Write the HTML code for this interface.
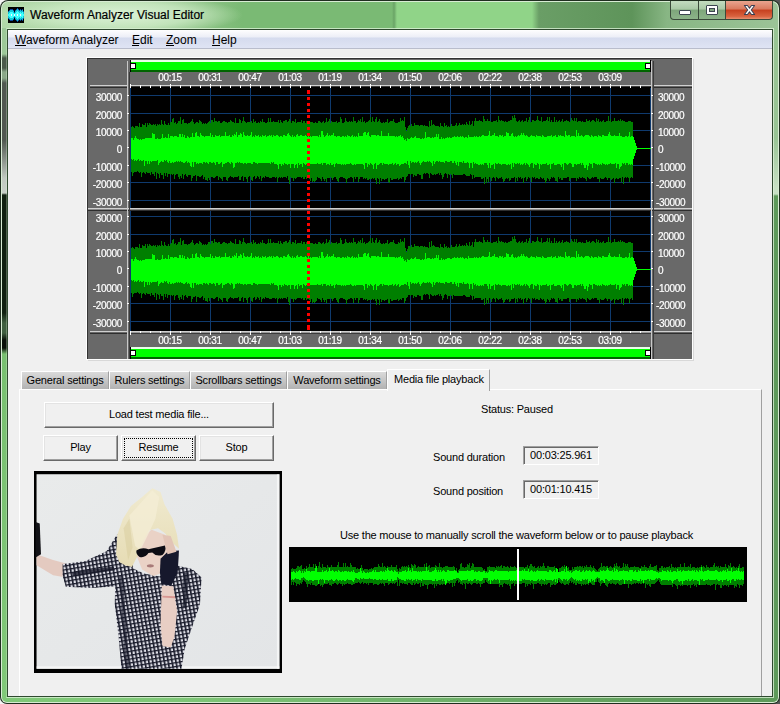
<!DOCTYPE html>
<html><head><meta charset="utf-8">
<style>
*{box-sizing:border-box;margin:0;padding:0}
html,body{width:780px;height:704px;overflow:hidden;background:linear-gradient(90deg,#f4f4f4 0,#f4f4f4 390px,#555 391px)}
body{position:relative;font-family:"Liberation Sans",sans-serif;color:#000}
.abs{position:absolute}
#frame{position:absolute;left:0;top:0;width:780px;height:704px;border-radius:8px 8px 7px 7px;background:#1f2e1f}
#flight{position:absolute;left:1px;top:1px;width:778px;height:702px;border-radius:7px 7px 6px 6px;background:#d8ecd4}
#fgreen{position:absolute;left:2px;top:2px;width:776px;height:700px;border-radius:6px 6px 5px 5px;background:linear-gradient(90deg,#b0d8a8 0,#a6d09e 150px,#7aba74 240px,#7aba74 390px,#6aa466 392px,#90d488 395px,#90d488 530px,#6a9e66 537px,#5e945a 630px,#88b684 665px,#9cc498 780px)}
#sideL{position:absolute;left:2px;top:28px;width:5px;height:669px;background:linear-gradient(#9cc898 0,#9cc898 26px,#4a5a4a 30px,#4a5a4a 40px,#8aa888 44px,#8aa888 50px,#505850 55px,#505850 112px,#c0c8c0 150px,#c8d0c8 165px,#102010 167px,#102010 285px,#406040 295px,#406040 305px,#081008 312px,#081008 320px,#78c070 326px,#80c878 669px)}
#sideR{position:absolute;left:773px;top:28px;width:5px;height:670px;background:linear-gradient(#98c494 0,#98c494 110px,#c8e0c4 160px,#c8e0c4 166px,#5e9a5a 168px,#5e9a5a 669px)}
#bottom{position:absolute;left:2px;top:697px;width:776px;height:5px;border-radius:0 0 5px 5px;background:linear-gradient(90deg,#80c878 0,#80c878 150px,#76b870 350px,#5e9a5a 700px)}
#glow{position:absolute;left:0;top:2px;width:250px;height:26px;background:radial-gradient(ellipse 125px 20px at 118px 13px,rgba(225,245,220,.9) 0,rgba(205,235,198,.75) 60%,rgba(180,220,172,0) 100%)}
#title{position:absolute;left:30px;top:8px;font-size:12px;line-height:14px;color:#000;white-space:nowrap;-webkit-text-stroke:0.2px #000}
#icon{position:absolute;left:8px;top:7px;width:16px;height:16px;background:#000}
#caps{position:absolute;left:670px;top:1px;width:103px;height:19px}
.cap{position:absolute;top:0;height:19px;border:1px solid #3a4a3a;border-top:none}
#cmin{left:0;width:29px;border-radius:0 0 0 4px;background:linear-gradient(#c3dcc0 0,#a9c9a6 45%,#7ea67b 50%,#8cb389 100%)}
#cmax{left:28px;width:28px;background:linear-gradient(#c3dcc0 0,#a9c9a6 45%,#7ea67b 50%,#8cb389 100%)}
#cclose{left:55px;width:48px;border-radius:0 0 4px 0;background:linear-gradient(#e9a48f 0,#d97a5e 45%,#c6401f 50%,#d8623f 85%,#e89070 100%)}
#client{position:absolute;left:7px;top:29px;width:766px;height:668px;border:1px solid #2f4a2f;background:#f0f0f0;overflow:hidden}
#menubar{position:absolute;left:0;top:0;width:764px;height:19px;background:linear-gradient(#ffffff 0,#fbfbfd 1px,#eceef7 7px,#d5dbee 8px,#dfe4f4 18px);border-bottom:1px solid #b9bdcc}
.mi{position:absolute;top:3px;font-size:12px;line-height:14px;white-space:nowrap}
.mi u{text-decoration:none}
.ul{position:absolute;top:15px;height:1px;background:#000}
/* waveform control */
#wf{position:absolute;left:87px;top:58px;width:607px;height:303px;background:#696969}
.al{position:absolute;font-size:10px;line-height:12px;letter-spacing:-0.3px;color:#fff;white-space:nowrap;-webkit-text-stroke:0.2px #fff;will-change:transform}
.al.l{left:0;width:122px;text-align:right}
.al.r{left:658px;width:40px;text-align:left}
.tl{position:absolute;width:40px;text-align:center;font-size:10px;line-height:12px;letter-spacing:-0.3px;color:#fff;white-space:nowrap;-webkit-text-stroke:0.2px #fff;will-change:transform}
.tk{position:absolute;width:2px;height:1px;background:#fff}
/* tabs */
.tab{position:absolute;top:371px;height:18px;border-top:1px solid #fff;border-left:1px solid #fff;border-right:1px solid #a0a0a0;background:linear-gradient(#dadada,#b2b2b2);font-size:11px;letter-spacing:-0.2px;line-height:17px;text-align:center;white-space:nowrap}
.lbl{position:absolute;font-size:11px;letter-spacing:-0.2px;line-height:12px;white-space:nowrap}
.btn{position:absolute;background:#f0f0f0;border-top:1px solid #fff;border-left:1px solid #fff;border-right:1px solid #696969;border-bottom:1px solid #696969;box-shadow:inset -1px -1px 0 #a0a0a0,inset 1px 1px 0 #e3e3e3;font-size:11px;letter-spacing:-0.2px;text-align:center;white-space:nowrap}
.sunk{position:absolute;border-top:1px solid #a0a0a0;border-left:1px solid #a0a0a0;border-right:1px solid #fff;border-bottom:1px solid #fff;box-shadow:inset 1px 1px 0 #696969;font-size:11px;letter-spacing:-0.2px;line-height:16px;text-align:center;white-space:nowrap}
</style></head><body>
<div id="frame"></div><div id="flight"></div><div id="fgreen"></div>
<div id="sideL"></div><div id="sideR"></div><div id="bottom"></div>
<div class="abs" style="left:6px;top:28px;width:768px;height:670px;border:1px solid rgba(225,245,220,.75);border-left-color:rgba(225,245,220,.3)"></div>
<div id="glow"></div>
<div id="icon"><svg width="16" height="16" viewBox="0 0 16 16" shape-rendering="crispEdges"><rect width="16" height="16" fill="#000"/><rect x="0" y="4" width="1" height="8" fill="#0848a0"/><rect x="0" y="5" width="1" height="6" fill="#10c8d8"/><rect x="0" y="7" width="1" height="2" fill="#40ffff"/><rect x="1" y="3" width="1" height="10" fill="#0848a0"/><rect x="1" y="4" width="1" height="8" fill="#10c8d8"/><rect x="1" y="6" width="1" height="4" fill="#40ffff"/><rect x="2" y="2" width="1" height="12" fill="#0848a0"/><rect x="2" y="3" width="1" height="10" fill="#10c8d8"/><rect x="2" y="5" width="1" height="6" fill="#40ffff"/><rect x="3" y="2" width="1" height="12" fill="#0848a0"/><rect x="3" y="3" width="1" height="10" fill="#10c8d8"/><rect x="3" y="5" width="1" height="6" fill="#40ffff"/><rect x="4" y="2" width="1" height="12" fill="#0848a0"/><rect x="4" y="3" width="1" height="10" fill="#10c8d8"/><rect x="4" y="5" width="1" height="6" fill="#40ffff"/><rect x="5" y="3" width="1" height="10" fill="#0848a0"/><rect x="5" y="4" width="1" height="8" fill="#10c8d8"/><rect x="5" y="6" width="1" height="4" fill="#40ffff"/><rect x="6" y="5" width="1" height="6" fill="#0848a0"/><rect x="6" y="6" width="1" height="4" fill="#10c8d8"/><rect x="6" y="7" width="1" height="2" fill="#40ffff"/><rect x="7" y="3" width="1" height="10" fill="#0848a0"/><rect x="7" y="4" width="1" height="8" fill="#10c8d8"/><rect x="7" y="6" width="1" height="4" fill="#40ffff"/><rect x="8" y="2" width="1" height="12" fill="#0848a0"/><rect x="8" y="3" width="1" height="10" fill="#10c8d8"/><rect x="8" y="5" width="1" height="6" fill="#40ffff"/><rect x="9" y="1" width="1" height="14" fill="#0848a0"/><rect x="9" y="2" width="1" height="12" fill="#10c8d8"/><rect x="9" y="4" width="1" height="8" fill="#40ffff"/><rect x="10" y="2" width="1" height="12" fill="#0848a0"/><rect x="10" y="3" width="1" height="10" fill="#10c8d8"/><rect x="10" y="5" width="1" height="6" fill="#40ffff"/><rect x="11" y="3" width="1" height="10" fill="#0848a0"/><rect x="11" y="4" width="1" height="8" fill="#10c8d8"/><rect x="11" y="6" width="1" height="4" fill="#40ffff"/><rect x="12" y="2" width="1" height="12" fill="#0848a0"/><rect x="12" y="3" width="1" height="10" fill="#10c8d8"/><rect x="12" y="5" width="1" height="6" fill="#40ffff"/><rect x="13" y="3" width="1" height="10" fill="#0848a0"/><rect x="13" y="4" width="1" height="8" fill="#10c8d8"/><rect x="13" y="6" width="1" height="4" fill="#40ffff"/><rect x="14" y="2" width="1" height="12" fill="#0848a0"/><rect x="14" y="3" width="1" height="10" fill="#10c8d8"/><rect x="14" y="5" width="1" height="6" fill="#40ffff"/><rect x="15" y="4" width="1" height="8" fill="#0848a0"/><rect x="15" y="5" width="1" height="6" fill="#10c8d8"/><rect x="15" y="7" width="1" height="2" fill="#40ffff"/><rect x="3" y="7" width="1" height="2" fill="#f0f8ff"/><rect x="6" y="7" width="1" height="2" fill="#f0f8ff"/><rect x="9" y="7" width="1" height="2" fill="#f0f8ff"/><rect x="12" y="7" width="1" height="2" fill="#f0f8ff"/></svg></div>
<div id="title">Waveform Analyzer Visual Editor</div>
<div id="caps">
 <div class="cap" id="cmin"><div class="abs" style="left:8px;top:9px;width:12px;height:5px;background:#fff;border:1px solid #3c4650;border-radius:1px"></div></div>
 <div class="cap" id="cmax"><div class="abs" style="left:7px;top:4px;width:12px;height:10px;border:1px solid #3c4650;border-radius:1px;background:#fff"><div class="abs" style="left:2px;top:2px;width:6px;height:4px;background:#82a880;border:1px solid #3c4650"></div></div></div>
 <div class="cap" id="cclose"><svg class="abs" style="left:17px;top:3px" width="13" height="12" viewBox="-1 -1 14 12" preserveAspectRatio="none"><path d="M0.5 0.5H3.8L6 3.2L8.2 0.5H11.5L7.9 5L11.5 9.5H8.2L6 6.8L3.8 9.5H0.5L4.1 5Z" fill="#fff" stroke="#3a3f52" stroke-width="1.1" stroke-linejoin="round"/></svg></div>
</div>

<div id="client">
 <div id="menubar">
  <div class="mi" style="left:7px"><u>W</u>aveform Analyzer</div>
  <div class="mi" style="left:124px"><u>E</u>dit</div>
  <div class="mi" style="left:158px"><u>Z</u>oom</div>
  <div class="mi" style="left:204px"><u>H</u>elp</div>
  <div class="ul" style="left:7px;width:11px"></div><div class="ul" style="left:124px;width:7px"></div><div class="ul" style="left:158px;width:8px"></div><div class="ul" style="left:204px;width:8px"></div>
 </div>
</div>

<!-- waveform control (page coords) -->
<svg class="abs" style="left:0;top:0" width="780" height="704" shape-rendering="crispEdges">
<rect x="86" y="57" width="607" height="1" fill="#ffffff"/>
<rect x="86" y="57" width="1" height="303" fill="#ffffff"/>
<rect x="87" y="58" width="606" height="302" fill="#696969"/>
<rect x="87" y="58" width="606" height="1" fill="#333"/>
<rect x="87" y="58" width="1" height="302" fill="#333"/>
<rect x="87" y="359" width="606" height="1" fill="#fff"/>
<rect x="692" y="58" width="1" height="302" fill="#fff"/>
<rect x="88" y="360" width="606" height="1" fill="#d8d8d8"/>
<rect x="693" y="59" width="1" height="302" fill="#d8d8d8"/>
<rect x="130" y="87" width="521" height="121" fill="#000"/>
<rect x="130" y="210" width="521" height="121" fill="#000"/>
<rect x="90" y="85" width="37" height="1" fill="#d0d0d0"/>
<rect x="90" y="87" width="37" height="1" fill="#2e2e2e"/>
<rect x="130" y="85" width="521" height="1" fill="#d0d0d0"/>
<rect x="130" y="86" width="521" height="1" fill="#3a3a3a"/>
<rect x="654" y="85" width="38" height="1" fill="#d0d0d0"/>
<rect x="654" y="87" width="38" height="1" fill="#2e2e2e"/>
<rect x="88" y="208" width="604" height="1" fill="#d0d0d0"/>
<rect x="88" y="209" width="604" height="1" fill="#8a8a8a"/>
<rect x="88" y="210" width="604" height="1" fill="#2e2e2e"/>
<rect x="90" y="331" width="37" height="1" fill="#d0d0d0"/>
<rect x="90" y="333" width="37" height="1" fill="#2e2e2e"/>
<rect x="130" y="331" width="521" height="1" fill="#d0d0d0"/>
<rect x="130" y="332" width="521" height="1" fill="#9a9a9a"/>
<rect x="130" y="333" width="521" height="1" fill="#3a3a3a"/>
<rect x="654" y="331" width="38" height="1" fill="#d0d0d0"/>
<rect x="654" y="333" width="38" height="1" fill="#2e2e2e"/>
<rect x="127" y="61" width="1" height="298" fill="#c8c8c8"/>
<rect x="129" y="72" width="1" height="287" fill="#3a3a3a"/>
<rect x="651" y="61" width="1" height="298" fill="#c8c8c8"/>
<rect x="653" y="61" width="1" height="298" fill="#3a3a3a"/>
<rect x="130" y="95" width="521" height="1" fill="#0f3a6e"/>
<rect x="130" y="113" width="521" height="1" fill="#0f3a6e"/>
<rect x="130" y="130" width="521" height="1" fill="#0f3a6e"/>
<rect x="130" y="165" width="521" height="1" fill="#0f3a6e"/>
<rect x="130" y="182" width="521" height="1" fill="#0f3a6e"/>
<rect x="130" y="200" width="521" height="1" fill="#0f3a6e"/>
<rect x="130" y="216" width="521" height="1" fill="#0f3a6e"/>
<rect x="130" y="234" width="521" height="1" fill="#0f3a6e"/>
<rect x="130" y="251" width="521" height="1" fill="#0f3a6e"/>
<rect x="130" y="286" width="521" height="1" fill="#0f3a6e"/>
<rect x="130" y="303" width="521" height="1" fill="#0f3a6e"/>
<rect x="130" y="321" width="521" height="1" fill="#0f3a6e"/>
<rect x="130" y="88" width="1" height="120" fill="#0f3a6e"/>
<rect x="130" y="211" width="1" height="120" fill="#0f3a6e"/>
<rect x="170" y="88" width="1" height="120" fill="#0f3a6e"/>
<rect x="170" y="211" width="1" height="120" fill="#0f3a6e"/>
<rect x="210" y="88" width="1" height="120" fill="#0f3a6e"/>
<rect x="210" y="211" width="1" height="120" fill="#0f3a6e"/>
<rect x="250" y="88" width="1" height="120" fill="#0f3a6e"/>
<rect x="250" y="211" width="1" height="120" fill="#0f3a6e"/>
<rect x="290" y="88" width="1" height="120" fill="#0f3a6e"/>
<rect x="290" y="211" width="1" height="120" fill="#0f3a6e"/>
<rect x="330" y="88" width="1" height="120" fill="#0f3a6e"/>
<rect x="330" y="211" width="1" height="120" fill="#0f3a6e"/>
<rect x="370" y="88" width="1" height="120" fill="#0f3a6e"/>
<rect x="370" y="211" width="1" height="120" fill="#0f3a6e"/>
<rect x="410" y="88" width="1" height="120" fill="#0f3a6e"/>
<rect x="410" y="211" width="1" height="120" fill="#0f3a6e"/>
<rect x="450" y="88" width="1" height="120" fill="#0f3a6e"/>
<rect x="450" y="211" width="1" height="120" fill="#0f3a6e"/>
<rect x="490" y="88" width="1" height="120" fill="#0f3a6e"/>
<rect x="490" y="211" width="1" height="120" fill="#0f3a6e"/>
<rect x="530" y="88" width="1" height="120" fill="#0f3a6e"/>
<rect x="530" y="211" width="1" height="120" fill="#0f3a6e"/>
<rect x="570" y="88" width="1" height="120" fill="#0f3a6e"/>
<rect x="570" y="211" width="1" height="120" fill="#0f3a6e"/>
<rect x="610" y="88" width="1" height="120" fill="#0f3a6e"/>
<rect x="610" y="211" width="1" height="120" fill="#0f3a6e"/>
<rect x="650" y="88" width="1" height="120" fill="#0f3a6e"/>
<rect x="650" y="211" width="1" height="120" fill="#0f3a6e"/>
<path d="M131 127H131V127H132V126H133V127H134V128H135V126H136V126H137V126H138V127H139V123H140V127H141V127H142V124H143V125H144V125H145V123H146V127H147V123H148V125H149V123H150V124H151V125H152V125H153V124H154V125H155V124H156V126H157V124H158V125H159V124H160V125H161V120H162V124H163V125H164V121H165V124H166V125H167V125H168V123H169V125H170V122H171V122H172V119H173V118H174V123H175V122H176V124H177V123H178V121H179V121H180V117H181V124H182V120H183V119H184V123H185V123H186V123H187V124H188V123H189V123H190V122H191V121H192V119H193V122H194V124H195V123H196V122H197V122H198V123H199V120H200V121H201V122H202V124H203V123H204V124H205V123H206V124H207V123H208V122H209V121H210V123H211V120H212V120H213V122H214V118H215V121H216V121H217V122H218V121H219V121H220V123H221V123H222V122H223V121H224V121H225V122H226V122H227V123H228V122H229V122H230V120H231V121H232V122H233V122H234V123H235V118H236V123H237V123H238V123H239V119H240V120H241V123H242V121H243V117H244V121H245V122H246V123H247V122H248V122H249V122H250V122H251V121H252V123H253V119H254V122H255V121H256V123H257V123H258V122H259V123H260V121H261V122H262V119H263V122H264V122H265V123H266V123H267V122H268V118H269V122H270V118H271V122H272V122H273V121H274V122H275V122H276V122H277V122H278V120H279V123H280V120H281V122H282V123H283V121H284V121H285V120H286V120H287V122H288V121H289V119H290V121H291V123H292V121H293V121H294V122H295V119H296V123H297V122H298V122H299V122H300V122H301V120H302V123H303V121H304V121H305V123H306V121H307V123H308V122H309V121H310V122H311V122H312V122H313V123H314V123H315V122H316V123H317V123H318V121H319V121H320V122H321V123H322V122H323V121H324V123H325V122H326V118H327V122H328V121H329V119H330V123H331V121H332V122H333V122H334V122H335V122H336V121H337V123H338V122H339V122H340V117H341V119H342V123H343V123H344V122H345V118H346V121H347V122H348V122H349V121H350V122H351V121H352V122H353V117H354V121H355V121H356V123H357V122H358V120H359V121H360V119H361V122H362V117H363V122H364V121H365V123H366V122H367V122H368V121H369V120H370V117H371V122H372V117H373V121H374V122H375V119H376V117H377V122H378V121H379V119H380V122H381V123H382V123H383V122H384V123H385V122H386V122H387V119H388V123H389V122H390V121H391V121H392V121H393V119H394V122H395V123H396V123H397V123H398V122H399V122H400V118H401V121H402V120H403V121H404V117H405V127H406V131H407V128H408V126H409V125H410V126H411V124H412V126H413V126H414V123H415V125H416V125H417V125H418V125H419V126H420V125H421V125H422V125H423V126H424V125H425V126H426V126H427V126H428V127H429V121H430V126H431V120H432V125H433V124H434V125H435V126H436V126H437V126H438V126H439V127H440V123H441V126H442V126H443V127H444V123H445V126H446V125H447V127H448V126H449V127H450V126H451V124H452V126H453V126H454V126H455V125H456V123H457V126H458V125H459V123H460V125H461V125H462V124H463V125H464V124H465V125H466V122H467V124H468V125H469V121H470V125H471V124H472V121H473V126H474V121H475V118H476V121H477V121H478V121H479V120H480V121H481V121H482V122H483V116H484V119H485V121H486V121H487V119H488V121H489V121H490V121H491V122H492V122H493V121H494V121H495V121H496V120H497V122H498V116H499V120H500V121H501V120H502V121H503V121H504V122H505V121H506V122H507V122H508V121H509V121H510V120H511V120H512V116H513V118H514V115H515V118H516V121H517V122H518V121H519V120H520V122H521V121H522V120H523V122H524V121H525V121H526V118H527V122H528V120H529V117H530V122H531V122H532V120H533V120H534V121H535V121H536V120H537V116H538V120H539V121H540V121H541V117H542V122H543V121H544V121H545V121H546V120H547V117H548V121H549V117H550V122H551V120H552V122H553V122H554V117H555V122H556V120H557V122H558V121H559V120H560V122H561V121H562V119H563V122H564V121H565V121H566V120H567V121H568V121H569V122H570V121H571V118H572V120H573V121H574V118H575V121H576V118H577V122H578V121H579V121H580V121H581V122H582V121H583V122H584V122H585V122H586V119H587V121H588V121H589V120H590V122H591V121H592V120H593V120H594V121H595V122H596V118H597V121H598V119H599V122H600V121H601V122H602V121H603V120H604V122H605V122H606V121H607V121H608V116H609V121H610V119H611V122H612V121H613V121H614V118H615V121H616V121H617V121H618V120H619V121H620V119H621V121H622V120H623V121H624V121H625V122H626V122H627V122H628V121H629V121H630V121H631V122H632V122H633V178H632V177H631V178H630V182H629V178H628V177H627V178H626V177H625V178H624V184H623V177H622V182H621V178H620V178H619V179H618V179H617V178H616V179H615V183H614V178H613V179H612V180H611V179H610V178H609V178H608V180H607V178H606V177H605V178H604V179H603V179H602V179H601V178H600V182H599V179H598V179H597V177H596V177H595V177H594V178H593V177H592V178H591V179H590V179H589V178H588V177H587V181H586V179H585V178H584V178H583V177H582V178H581V178H580V177H579V179H578V178H577V181H576V178H575V178H574V178H573V178H572V178H571V179H570V181H569V177H568V177H567V178H566V178H565V178H564V178H563V180H562V180H561V178H560V179H559V177H558V182H557V181H556V181H555V178H554V177H553V178H552V177H551V179H550V181H549V179H548V178H547V181H546V183H545V180H544V178H543V179H542V178H541V177H540V179H539V179H538V178H537V178H536V179H535V177H534V178H533V177H532V182H531V178H530V178H529V177H528V179H527V181H526V177H525V178H524V183H523V178H522V179H521V177H520V178H519V177H518V181H517V178H516V182H515V177H514V178H513V178H512V178H511V180H510V181H509V178H508V179H507V178H506V179H505V181H504V182H503V179H502V177H501V178H500V178H499V179H498V178H497V177H496V181H495V178H494V177H493V178H492V181H491V178H490V177H489V182H488V179H487V183H486V177H485V184H484V178H483V179H482V179H481V177H480V177H479V177H478V177H477V177H476V177H475V178H474V175H473V179H472V175H471V174H470V176H469V176H468V176H467V176H466V175H465V174H464V174H463V175H462V175H461V175H460V175H459V175H458V175H457V175H456V175H455V175H454V174H453V178H452V175H451V174H450V175H449V174H448V178H447V174H446V173H445V174H444V177H443V179H442V175H441V173H440V175H439V173H438V174H437V174H436V175H435V174H434V175H433V175H432V174H431V173H430V178H429V174H428V173H427V173H426V174H425V173H424V174H423V179H422V179H421V175H420V175H419V174H418V174H417V176H416V176H415V175H414V177H413V174H412V174H411V175H410V174H409V174H408V176H407V177H406V180H405V182H404V177H403V177H402V179H401V178H400V179H399V180H398V178H397V179H396V179H395V179H394V179H393V180H392V180H391V178H390V183H389V182H388V178H387V179H386V179H385V180H384V179H383V179H382V181H381V178H380V184H379V179H378V178H377V184H376V180H375V178H374V179H373V178H372V179H371V179H370V179H369V180H368V180H367V178H366V179H365V178H364V179H363V177H362V177H361V177H360V179H359V182H358V177H357V177H356V179H355V177H354V182H353V178H352V177H351V177H350V178H349V178H348V179H347V183H346V179H345V178H344V178H343V177H342V177H341V177H340V178H339V182H338V181H337V179H336V177H335V177H334V178H333V180H332V178H331V177H330V178H329V178H328V178H327V182H326V179H325V181H324V179H323V177H322V181H321V179H320V178H319V178H318V177H317V180H316V181H315V182H314V181H313V182H312V178H311V181H310V179H309V178H308V178H307V179H306V177H305V179H304V179H303V177H302V178H301V177H300V177H299V177H298V177H297V178H296V179H295V178H294V181H293V178H292V178H291V177H290V184H289V180H288V176H287V178H286V177H285V177H284V177H283V178H282V177H281V178H280V177H279V178H278V182H277V177H276V178H275V177H274V177H273V177H272V178H271V178H270V178H269V177H268V177H267V177H266V176H265V178H264V177H263V178H262V181H261V176H260V179H259V177H258V176H257V178H256V179H255V176H254V177H253V181H252V180H251V177H250V176H249V177H248V182H247V179H246V177H245V177H244V181H243V176H242V177H241V180H240V180H239V176H238V177H237V177H236V177H235V177H234V178H233V177H232V177H231V176H230V177H229V178H228V181H227V180H226V177H225V177H224V177H223V181H222V179H221V178H220V177H219V180H218V176H217V176H216V177H215V178H214V178H213V177H212V177H211V177H210V180H209V178H208V181H207V180H206V180H205V177H204V179H203V175H202V176H201V177H200V177H199V176H198V176H197V181H196V175H195V176H194V176H193V178H192V181H191V175H190V175H189V175H188V177H187V176H186V174H185V175H184V179H183V174H182V178H181V176H180V179H179V177H178V174H177V174H176V175H175V179H174V174H173V175H172V174H171V175H170V174H169V174H168V177H167V173H166V176H165V173H164V179H163V175H162V175H161V173H160V178H159V174H158V173H157V179H156V172H155V176H154V174H153V174H152V172H151V175H150V173H149V173H148V173H147V172H146V174H145V173H144V172H143V173H142V177H141V172H140V173H139V172H138V171H137V172H136V172H135V172H134V173H133V176H132V172H131Z" fill="#007f00"/>
<path d="M131 138H131V138H132V138H133V140H134V138H135V136H136V138H137V139H138V139H139V140H140V139H141V140H142V139H143V139H144V139H145V138H146V138H147V138H148V138H149V138H150V138H151V138H152V133H153V134H154V134H155V139H156V139H157V138H158V139H159V139H160V139H161V138H162V134H163V138H164V138H165V137H166V138H167V138H168V134H169V138H170V136H171V136H172V136H173V137H174V136H175V136H176V136H177V137H178V137H179V134H180V134H181V137H182V134H183V137H184V135H185V138H186V138H187V136H188V137H189V138H190V137H191V137H192V133H193V137H194V137H195V133H196V132H197V136H198V136H199V137H200V133H201V135H202V136H203V136H204V137H205V136H206V136H207V136H208V136H209V136H210V133H211V137H212V135H213V137H214V137H215V135H216V136H217V136H218V136H219V135H220V137H221V136H222V136H223V136H224V136H225V132H226V136H227V136H228V136H229V135H230V137H231V137H232V135H233V136H234V134H235V135H236V132H237V137H238V135H239V135H240V133H241V134H242V137H243V132H244V135H245V136H246V136H247V135H248V136H249V136H250V135H251V132H252V137H253V136H254V137H255V135H256V136H257V136H258V135H259V137H260V136H261V137H262V135H263V136H264V136H265V135H266V137H267V136H268V136H269V135H270V136H271V135H272V137H273V135H274V136H275V136H276V135H277V135H278V136H279V137H280V136H281V136H282V137H283V135H284V135H285V136H286V136H287V134H288V133H289V135H290V136H291V137H292V135H293V137H294V136H295V137H296V135H297V134H298V136H299V136H300V135H301V135H302V136H303V136H304V136H305V135H306V136H307V137H308V135H309V137H310V136H311V137H312V136H313V136H314V136H315V136H316V136H317V136H318V137H319V135H320V137H321V131H322V131H323V135H324V137H325V136H326V135H327V133H328V136H329V135H330V136H331V135H332V135H333V133H334V136H335V136H336V137H337V136H338V136H339V136H340V137H341V137H342V136H343V136H344V137H345V136H346V137H347V135H348V136H349V136H350V137H351V136H352V135H353V137H354V136H355V137H356V136H357V137H358V133H359V136H360V136H361V136H362V136H363V133H364V132H365V132H366V135H367V133H368V132H369V136H370V137H371V135H372V135H373V135H374V135H375V135H376V136H377V135H378V135H379V136H380V136H381V131H382V136H383V136H384V136H385V136H386V136H387V136H388V133H389V136H390V136H391V136H392V136H393V136H394V136H395V137H396V136H397V137H398V136H399V136H400V135H401V137H402V136H403V138H404V140H405V139H406V141H407V138H408V139H409V139H410V138H411V137H412V138H413V138H414V137H415V136H416V138H417V138H418V138H419V138H420V139H421V139H422V138H423V139H424V138H425V132H426V138H427V137H428V137H429V137H430V138H431V138H432V137H433V138H434V137H435V137H436V134H437V137H438V134H439V139H440V139H441V137H442V139H443V138H444V139H445V138H446V138H447V137H448V138H449V137H450V138H451V138H452V137H453V137H454V136H455V137H456V137H457V136H458V137H459V137H460V136H461V137H462V136H463V137H464V138H465V137H466V137H467V138H468V135H469V137H470V137H471V137H472V137H473V137H474V136H475V137H476V136H477V137H478V137H479V136H480V137H481V136H482V135H483V135H484V136H485V136H486V136H487V136H488V135H489V131H490V136H491V136H492V135H493V135H494V133H495V136H496V136H497V136H498V137H499V135H500V135H501V136H502V135H503V137H504V136H505V136H506V132H507V133H508V133H509V136H510V136H511V134H512V133H513V136H514V137H515V136H516V137H517V136H518V135H519V136H520V135H521V133H522V135H523V133H524V135H525V136H526V135H527V136H528V137H529V137H530V136H531V135H532V136H533V136H534V136H535V137H536V135H537V136H538V136H539V136H540V136H541V137H542V135H543V136H544V137H545V137H546V137H547V136H548V136H549V136H550V136H551V135H552V137H553V136H554V136H555V135H556V137H557V137H558V135H559V136H560V135H561V136H562V136H563V136H564V137H565V131H566V135H567V136H568V135H569V135H570V137H571V136H572V136H573V136H574V136H575V137H576V130H577V136H578V133H579V136H580V136H581V135H582V136H583V137H584V136H585V135H586V135H587V135H588V135H589V136H590V137H591V135H592V136H593V137H594V136H595V136H596V136H597V137H598V135H599V136H600V136H601V137H602V135H603V135H604V136H605V136H606V136H607V136H608V134H609V132H610V135H611V136H612V136H613V136H614V135H615V136H616V136H617V136H618V136H619V133H620V136H621V136H622V137H623V137H624V137H625V136H626V136H627V137H628V136H629V132H630V137H631V136H632V136H633V165H632V164H631V165H630V164H629V165H628V163H627V163H626V165H625V163H624V164H623V163H622V166H621V167H620V169H619V164H618V164H617V168H616V163H615V164H614V164H613V164H612V164H611V163H610V164H609V164H608V165H607V164H606V165H605V164H604V164H603V163H602V165H601V164H600V165H599V164H598V165H597V164H596V164H595V163H594V163H593V168H592V164H591V164H590V163H589V166H588V170H587V165H586V168H585V168H584V165H583V163H582V165H581V163H580V164H579V164H578V164H577V165H576V164H575V164H574V167H573V167H572V164H571V163H570V163H569V164H568V165H567V164H566V163H565V163H564V170H563V164H562V167H561V165H560V164H559V164H558V164H557V165H556V165H555V165H554V163H553V164H552V164H551V169H550V164H549V165H548V165H547V163H546V164H545V164H544V164H543V164H542V165H541V164H540V169H539V164H538V163H537V165H536V165H535V164H534V168H533V163H532V163H531V164H530V167H529V165H528V164H527V163H526V165H525V163H524V164H523V165H522V164H521V165H520V163H519V164H518V163H517V164H516V164H515V163H514V167H513V163H512V169H511V164H510V165H509V164H508V165H507V165H506V164H505V164H504V164H503V164H502V165H501V164H500V164H499V163H498V164H497V164H496V163H495V169H494V164H493V165H492V165H491V168H490V163H489V168H488V165H487V163H486V163H485V163H484V165H483V164H482V165H481V164H480V165H479V165H478V164H477V164H476V163H475V164H474V162H473V168H472V163H471V163H470V168H469V163H468V162H467V163H466V163H465V163H464V161H463V163H462V162H461V162H460V162H459V166H458V162H457V165H456V163H455V161H454V163H453V163H452V161H451V161H450V162H449V162H448V162H447V161H446V161H445V163H444V162H443V162H442V162H441V162H440V161H439V162H438V161H437V161H436V162H435V164H434V161H433V166H432V163H431V162H430V161H429V162H428V161H427V162H426V162H425V162H424V161H423V162H422V163H421V165H420V163H419V161H418V162H417V163H416V162H415V163H414V162H413V162H412V163H411V161H410V168H409V165H408V161H407V164H406V163H405V163H404V164H403V164H402V164H401V165H400V166H399V164H398V164H397V165H396V163H395V164H394V165H393V163H392V164H391V164H390V164H389V165H388V164H387V164H386V164H385V164H384V163H383V165H382V163H381V163H380V164H379V165H378V165H377V169H376V163H375V164H374V169H373V165H372V164H371V163H370V165H369V164H368V167H367V163H366V163H365V169H364V165H363V164H362V164H361V164H360V164H359V164H358V164H357V164H356V165H355V164H354V165H353V165H352V164H351V163H350V164H349V164H348V164H347V164H346V165H345V164H344V165H343V164H342V165H341V164H340V164H339V164H338V164H337V163H336V164H335V167H334V164H333V165H332V165H331V163H330V165H329V164H328V164H327V165H326V163H325V163H324V163H323V165H322V163H321V164H320V164H319V164H318V163H317V164H316V164H315V164H314V164H313V164H312V164H311V164H310V163H309V164H308V164H307V164H306V165H305V164H304V163H303V167H302V164H301V164H300V165H299V163H298V168H297V164H296V165H295V168H294V164H293V164H292V164H291V168H290V164H289V164H288V165H287V164H286V164H285V163H284V165H283V164H282V166H281V164H280V164H279V169H278V165H277V164H276V164H275V164H274V162H273V163H272V162H271V164H270V163H269V163H268V163H267V163H266V163H265V163H264V163H263V163H262V163H261V163H260V163H259V163H258V164H257V163H256V163H255V162H254V162H253V164H252V164H251V163H250V163H249V163H248V163H247V164H246V163H245V163H244V164H243V163H242V163H241V163H240V162H239V163H238V162H237V163H236V163H235V167H234V168H233V163H232V162H231V164H230V163H229V162H228V162H227V163H226V163H225V164H224V164H223V167H222V162H221V163H220V164H219V164H218V162H217V162H216V165H215V163H214V162H213V163H212V163H211V162H210V162H209V164H208V163H207V162H206V163H205V162H204V162H203V164H202V163H201V163H200V163H199V164H198V163H197V164H196V162H195V162H194V167H193V162H192V167H191V166H190V163H189V162H188V163H187V161H186V162H185V163H184V163H183V162H182V162H181V161H180V162H179V161H178V162H177V161H176V162H175V162H174V163H173V162H172V163H171V163H170V161H169V163H168V162H167V160H166V161H165V160H164V162H163V162H162V161H161V162H160V163H159V165H158V160H157V161H156V161H155V161H154V161H153V161H152V162H151V161H150V164H149V161H148V164H147V161H146V161H145V166H144V160H143V161H142V161H141V160H140V161H139V159H138V160H137V161H136V160H135V161H134V159H133V160H132V159H131ZM633 136L637 147L637 149L633 160Z" fill="#00ff00"/>
<path d="M131 248H131V248H132V247H133V248H134V249H135V247H136V247H137V247H138V248H139V244H140V248H141V248H142V245H143V246H144V246H145V244H146V248H147V244H148V246H149V244H150V245H151V246H152V246H153V245H154V246H155V245H156V247H157V245H158V246H159V245H160V246H161V241H162V245H163V246H164V242H165V245H166V246H167V246H168V244H169V246H170V244H171V243H172V240H173V239H174V244H175V243H176V245H177V244H178V242H179V242H180V238H181V245H182V241H183V240H184V244H185V244H186V244H187V245H188V244H189V244H190V243H191V242H192V240H193V243H194V245H195V244H196V243H197V243H198V244H199V241H200V242H201V243H202V245H203V244H204V245H205V244H206V245H207V244H208V242H209V242H210V244H211V241H212V241H213V243H214V239H215V242H216V242H217V243H218V242H219V242H220V244H221V244H222V243H223V242H224V242H225V243H226V243H227V244H228V243H229V243H230V241H231V242H232V243H233V243H234V244H235V239H236V244H237V244H238V244H239V240H240V241H241V244H242V242H243V238H244V242H245V243H246V244H247V243H248V243H249V243H250V243H251V242H252V244H253V240H254V243H255V242H256V244H257V244H258V243H259V244H260V242H261V243H262V240H263V243H264V243H265V244H266V244H267V243H268V239H269V243H270V239H271V243H272V243H273V242H274V243H275V243H276V243H277V243H278V241H279V244H280V241H281V243H282V244H283V242H284V242H285V241H286V241H287V243H288V242H289V240H290V242H291V244H292V242H293V242H294V243H295V240H296V244H297V243H298V243H299V243H300V243H301V241H302V244H303V242H304V242H305V244H306V242H307V244H308V243H309V242H310V243H311V243H312V243H313V244H314V244H315V243H316V244H317V244H318V242H319V242H320V243H321V244H322V243H323V242H324V244H325V243H326V239H327V243H328V242H329V240H330V244H331V242H332V243H333V243H334V243H335V243H336V242H337V244H338V243H339V243H340V238H341V240H342V244H343V244H344V243H345V239H346V242H347V243H348V243H349V242H350V243H351V242H352V243H353V238H354V242H355V242H356V244H357V243H358V241H359V242H360V240H361V243H362V238H363V243H364V242H365V244H366V243H367V243H368V242H369V241H370V238H371V243H372V238H373V242H374V243H375V240H376V238H377V243H378V242H379V240H380V243H381V244H382V244H383V243H384V244H385V243H386V243H387V240H388V244H389V243H390V242H391V242H392V242H393V240H394V243H395V244H396V244H397V244H398V242H399V243H400V239H401V242H402V241H403V242H404V238H405V248H406V252H407V249H408V246H409V246H410V247H411V245H412V247H413V247H414V244H415V246H416V246H417V246H418V246H419V247H420V246H421V246H422V246H423V247H424V246H425V247H426V247H427V247H428V248H429V242H430V247H431V241H432V246H433V245H434V246H435V247H436V247H437V247H438V247H439V248H440V244H441V247H442V247H443V248H444V244H445V247H446V246H447V248H448V247H449V248H450V247H451V245H452V247H453V247H454V247H455V246H456V244H457V247H458V246H459V244H460V246H461V246H462V245H463V246H464V245H465V246H466V243H467V245H468V246H469V242H470V246H471V245H472V242H473V247H474V242H475V239H476V242H477V242H478V242H479V241H480V242H481V242H482V243H483V237H484V240H485V242H486V242H487V240H488V242H489V242H490V242H491V243H492V243H493V242H494V242H495V242H496V241H497V243H498V237H499V241H500V242H501V241H502V242H503V242H504V243H505V242H506V243H507V243H508V242H509V242H510V241H511V241H512V237H513V239H514V236H515V239H516V242H517V243H518V242H519V241H520V243H521V242H522V241H523V243H524V242H525V242H526V239H527V243H528V241H529V238H530V243H531V243H532V241H533V241H534V242H535V242H536V241H537V237H538V241H539V242H540V242H541V238H542V243H543V242H544V242H545V242H546V241H547V238H548V242H549V238H550V243H551V241H552V243H553V243H554V238H555V243H556V241H557V243H558V242H559V241H560V243H561V242H562V240H563V243H564V242H565V242H566V241H567V242H568V242H569V243H570V242H571V239H572V241H573V242H574V239H575V242H576V239H577V243H578V242H579V242H580V242H581V243H582V242H583V243H584V243H585V243H586V240H587V242H588V242H589V241H590V243H591V242H592V241H593V241H594V242H595V243H596V239H597V242H598V240H599V243H600V242H601V243H602V242H603V241H604V243H605V243H606V242H607V242H608V237H609V242H610V240H611V243H612V242H613V242H614V239H615V242H616V242H617V242H618V241H619V242H620V240H621V242H622V241H623V242H624V242H625V243H626V243H627V243H628V242H629V242H630V242H631V243H632V243H633V300H632V298H631V299H630V303H629V299H628V298H627V299H626V298H625V299H624V305H623V298H622V303H621V299H620V299H619V300H618V300H617V299H616V300H615V304H614V299H613V300H612V301H611V300H610V299H609V299H608V301H607V299H606V298H605V299H604V300H603V300H602V300H601V299H600V303H599V300H598V300H597V298H596V298H595V298H594V299H593V298H592V299H591V300H590V300H589V299H588V298H587V302H586V300H585V299H584V299H583V298H582V299H581V299H580V298H579V300H578V299H577V302H576V299H575V299H574V299H573V299H572V299H571V300H570V302H569V298H568V298H567V299H566V299H565V299H564V299H563V301H562V301H561V299H560V300H559V298H558V303H557V302H556V302H555V299H554V298H553V299H552V298H551V300H550V302H549V300H548V299H547V302H546V304H545V301H544V299H543V300H542V299H541V298H540V300H539V300H538V299H537V299H536V300H535V298H534V299H533V298H532V303H531V299H530V299H529V298H528V300H527V302H526V298H525V299H524V304H523V299H522V300H521V298H520V299H519V298H518V302H517V299H516V303H515V298H514V299H513V299H512V299H511V301H510V302H509V299H508V300H507V299H506V300H505V302H504V303H503V300H502V298H501V299H500V299H499V300H498V299H497V298H496V302H495V299H494V298H493V299H492V302H491V299H490V298H489V303H488V300H487V304H486V298H485V305H484V299H483V300H482V300H481V298H480V298H479V298H478V298H477V298H476V298H475V299H474V296H473V300H472V296H471V295H470V297H469V297H468V297H467V297H466V296H465V295H464V295H463V296H462V296H461V296H460V296H459V296H458V296H457V296H456V296H455V296H454V295H453V299H452V296H451V295H450V296H449V296H448V299H447V295H446V294H445V295H444V298H443V300H442V296H441V294H440V296H439V294H438V295H437V295H436V296H435V295H434V296H433V296H432V295H431V294H430V299H429V295H428V294H427V294H426V295H425V294H424V295H423V300H422V300H421V296H420V296H419V295H418V295H417V297H416V297H415V296H414V298H413V295H412V295H411V296H410V295H409V295H408V297H407V298H406V301H405V303H404V298H403V298H402V300H401V299H400V300H399V301H398V299H397V300H396V300H395V300H394V300H393V301H392V301H391V299H390V304H389V303H388V299H387V300H386V300H385V301H384V300H383V300H382V302H381V299H380V305H379V300H378V299H377V305H376V301H375V299H374V300H373V299H372V300H371V300H370V300H369V300H368V301H367V299H366V300H365V299H364V300H363V298H362V298H361V298H360V300H359V303H358V298H357V298H356V300H355V298H354V303H353V299H352V298H351V298H350V299H349V299H348V300H347V304H346V300H345V299H344V299H343V298H342V298H341V298H340V299H339V303H338V302H337V300H336V298H335V298H334V299H333V301H332V299H331V298H330V299H329V299H328V299H327V303H326V300H325V302H324V300H323V298H322V302H321V300H320V299H319V299H318V298H317V301H316V302H315V303H314V302H313V303H312V299H311V302H310V300H309V299H308V299H307V300H306V298H305V300H304V300H303V298H302V299H301V298H300V298H299V298H298V298H297V299H296V300H295V299H294V302H293V299H292V299H291V298H290V305H289V302H288V297H287V299H286V298H285V298H284V298H283V299H282V298H281V299H280V298H279V299H278V303H277V298H276V299H275V298H274V298H273V298H272V299H271V299H270V299H269V298H268V298H267V298H266V297H265V299H264V298H263V299H262V302H261V297H260V300H259V298H258V297H257V299H256V300H255V297H254V298H253V302H252V301H251V298H250V297H249V298H248V303H247V300H246V298H245V298H244V302H243V297H242V298H241V301H240V301H239V297H238V298H237V298H236V298H235V298H234V299H233V298H232V298H231V297H230V298H229V299H228V302H227V301H226V298H225V298H224V298H223V302H222V300H221V299H220V298H219V301H218V297H217V297H216V298H215V299H214V299H213V298H212V298H211V298H210V301H209V298H208V302H207V301H206V301H205V298H204V300H203V296H202V297H201V298H200V298H199V297H198V297H197V302H196V296H195V297H194V297H193V299H192V302H191V296H190V296H189V296H188V298H187V297H186V295H185V296H184V300H183V295H182V299H181V297H180V300H179V298H178V295H177V295H176V296H175V300H174V295H173V296H172V295H171V296H170V295H169V295H168V298H167V294H166V297H165V294H164V300H163V296H162V296H161V294H160V299H159V295H158V294H157V300H156V293H155V297H154V295H153V295H152V293H151V296H150V294H149V294H148V294H147V293H146V295H145V294H144V293H143V294H142V298H141V293H140V294H139V293H138V292H137V293H136V293H135V293H134V294H133V297H132V293H131Z" fill="#007f00"/>
<path d="M131 259H131V259H132V259H133V261H134V259H135V257H136V259H137V260H138V260H139V261H140V260H141V261H142V260H143V260H144V260H145V259H146V259H147V259H148V259H149V259H150V259H151V259H152V254H153V255H154V255H155V260H156V260H157V259H158V260H159V260H160V260H161V259H162V255H163V259H164V259H165V258H166V259H167V259H168V255H169V259H170V257H171V257H172V257H173V258H174V257H175V257H176V257H177V258H178V258H179V255H180V255H181V258H182V255H183V258H184V256H185V259H186V259H187V257H188V258H189V259H190V258H191V258H192V254H193V258H194V258H195V254H196V253H197V257H198V257H199V258H200V254H201V256H202V257H203V257H204V258H205V257H206V257H207V257H208V257H209V257H210V254H211V258H212V256H213V258H214V258H215V256H216V257H217V257H218V257H219V256H220V258H221V257H222V257H223V257H224V257H225V253H226V257H227V257H228V257H229V256H230V258H231V258H232V256H233V257H234V255H235V256H236V253H237V258H238V256H239V256H240V254H241V255H242V258H243V253H244V256H245V257H246V257H247V256H248V257H249V257H250V256H251V253H252V258H253V257H254V258H255V256H256V257H257V257H258V256H259V258H260V257H261V258H262V256H263V257H264V257H265V256H266V258H267V257H268V257H269V256H270V257H271V256H272V258H273V256H274V257H275V257H276V256H277V256H278V257H279V258H280V257H281V257H282V258H283V256H284V256H285V257H286V257H287V255H288V254H289V256H290V257H291V258H292V256H293V258H294V257H295V258H296V256H297V255H298V257H299V257H300V256H301V256H302V257H303V257H304V257H305V256H306V257H307V258H308V256H309V258H310V257H311V258H312V257H313V257H314V257H315V257H316V257H317V257H318V258H319V256H320V258H321V252H322V252H323V256H324V258H325V257H326V256H327V254H328V257H329V256H330V257H331V256H332V256H333V254H334V257H335V257H336V258H337V257H338V257H339V257H340V258H341V258H342V257H343V257H344V258H345V257H346V258H347V256H348V257H349V257H350V258H351V257H352V256H353V258H354V257H355V258H356V257H357V258H358V254H359V257H360V257H361V257H362V257H363V254H364V253H365V253H366V256H367V254H368V253H369V257H370V258H371V256H372V256H373V256H374V256H375V256H376V257H377V256H378V256H379V257H380V257H381V252H382V257H383V257H384V257H385V257H386V257H387V257H388V254H389V257H390V257H391V257H392V257H393V257H394V257H395V258H396V257H397V258H398V257H399V257H400V256H401V258H402V257H403V259H404V261H405V260H406V262H407V259H408V260H409V260H410V259H411V258H412V259H413V259H414V258H415V257H416V259H417V259H418V259H419V259H420V260H421V260H422V259H423V260H424V259H425V253H426V259H427V258H428V258H429V258H430V259H431V259H432V258H433V259H434V258H435V258H436V255H437V258H438V255H439V260H440V260H441V258H442V260H443V259H444V260H445V259H446V259H447V258H448V258H449V258H450V259H451V259H452V258H453V258H454V257H455V258H456V258H457V257H458V258H459V258H460V257H461V258H462V257H463V258H464V259H465V258H466V258H467V259H468V256H469V258H470V258H471V258H472V258H473V258H474V257H475V258H476V257H477V258H478V258H479V257H480V258H481V257H482V256H483V256H484V257H485V257H486V257H487V257H488V256H489V252H490V257H491V257H492V256H493V256H494V254H495V257H496V257H497V257H498V258H499V256H500V256H501V257H502V256H503V258H504V257H505V257H506V253H507V254H508V254H509V257H510V257H511V255H512V254H513V257H514V258H515V257H516V258H517V257H518V256H519V257H520V256H521V254H522V256H523V254H524V256H525V257H526V256H527V257H528V258H529V258H530V257H531V256H532V257H533V257H534V257H535V258H536V256H537V257H538V257H539V257H540V257H541V258H542V256H543V257H544V258H545V258H546V258H547V257H548V257H549V257H550V257H551V256H552V258H553V257H554V257H555V256H556V258H557V258H558V256H559V257H560V256H561V257H562V257H563V257H564V258H565V252H566V256H567V257H568V256H569V256H570V258H571V257H572V257H573V257H574V257H575V258H576V251H577V257H578V254H579V257H580V257H581V256H582V257H583V258H584V257H585V256H586V256H587V256H588V256H589V257H590V258H591V256H592V257H593V258H594V257H595V257H596V257H597V258H598V256H599V257H600V257H601V258H602V256H603V256H604V257H605V257H606V257H607V257H608V255H609V253H610V256H611V257H612V257H613V257H614V256H615V257H616V257H617V257H618V257H619V254H620V257H621V257H622V258H623V258H624V258H625V257H626V257H627V258H628V257H629V253H630V258H631V257H632V257H633V286H632V285H631V286H630V285H629V286H628V284H627V284H626V286H625V284H624V285H623V284H622V287H621V288H620V290H619V285H618V285H617V289H616V284H615V285H614V285H613V285H612V285H611V284H610V285H609V285H608V286H607V285H606V286H605V285H604V285H603V284H602V286H601V285H600V286H599V285H598V286H597V285H596V285H595V284H594V284H593V289H592V285H591V285H590V284H589V287H588V291H587V286H586V289H585V289H584V286H583V284H582V286H581V284H580V285H579V285H578V285H577V286H576V285H575V285H574V288H573V288H572V285H571V284H570V284H569V285H568V286H567V285H566V284H565V284H564V291H563V285H562V288H561V286H560V285H559V285H558V285H557V286H556V286H555V286H554V284H553V285H552V285H551V290H550V285H549V286H548V286H547V284H546V285H545V285H544V285H543V285H542V286H541V285H540V290H539V285H538V284H537V286H536V286H535V285H534V289H533V284H532V284H531V285H530V288H529V286H528V285H527V284H526V286H525V284H524V285H523V286H522V285H521V286H520V284H519V285H518V284H517V285H516V285H515V284H514V288H513V284H512V290H511V285H510V286H509V285H508V286H507V286H506V285H505V285H504V285H503V285H502V286H501V285H500V285H499V284H498V285H497V285H496V284H495V290H494V285H493V286H492V286H491V289H490V284H489V289H488V286H487V284H486V284H485V284H484V286H483V285H482V286H481V285H480V286H479V286H478V285H477V286H476V284H475V285H474V283H473V289H472V284H471V284H470V289H469V284H468V283H467V284H466V284H465V284H464V282H463V284H462V283H461V283H460V283H459V287H458V283H457V286H456V284H455V282H454V284H453V284H452V282H451V282H450V283H449V283H448V283H447V282H446V282H445V284H444V283H443V283H442V283H441V283H440V282H439V283H438V282H437V282H436V283H435V285H434V282H433V287H432V284H431V283H430V282H429V283H428V282H427V283H426V283H425V283H424V282H423V283H422V284H421V286H420V284H419V282H418V283H417V284H416V283H415V284H414V283H413V283H412V284H411V282H410V289H409V286H408V282H407V285H406V284H405V284H404V285H403V285H402V285H401V286H400V287H399V284H398V285H397V286H396V284H395V285H394V286H393V284H392V285H391V285H390V285H389V286H388V285H387V285H386V285H385V285H384V284H383V286H382V284H381V284H380V285H379V286H378V286H377V290H376V284H375V285H374V290H373V286H372V285H371V284H370V286H369V285H368V288H367V284H366V284H365V290H364V286H363V285H362V285H361V285H360V285H359V285H358V285H357V285H356V286H355V285H354V286H353V286H352V285H351V284H350V285H349V285H348V285H347V285H346V286H345V285H344V286H343V285H342V286H341V285H340V285H339V285H338V285H337V284H336V285H335V288H334V285H333V286H332V286H331V284H330V286H329V285H328V285H327V286H326V284H325V284H324V284H323V286H322V284H321V285H320V285H319V285H318V284H317V285H316V285H315V285H314V285H313V285H312V285H311V285H310V284H309V285H308V285H307V285H306V286H305V285H304V284H303V288H302V285H301V285H300V286H299V284H298V289H297V285H296V286H295V289H294V285H293V285H292V285H291V289H290V285H289V285H288V286H287V285H286V285H285V284H284V286H283V285H282V287H281V285H280V285H279V290H278V286H277V285H276V285H275V285H274V283H273V284H272V283H271V285H270V284H269V284H268V284H267V284H266V284H265V284H264V284H263V284H262V284H261V284H260V284H259V284H258V285H257V284H256V284H255V283H254V283H253V285H252V285H251V284H250V284H249V284H248V284H247V285H246V284H245V284H244V285H243V284H242V284H241V284H240V283H239V284H238V283H237V284H236V284H235V288H234V289H233V284H232V283H231V285H230V284H229V283H228V283H227V284H226V284H225V285H224V285H223V288H222V283H221V284H220V285H219V285H218V283H217V283H216V286H215V284H214V283H213V284H212V284H211V283H210V283H209V285H208V284H207V283H206V284H205V283H204V283H203V285H202V284H201V284H200V284H199V285H198V284H197V285H196V283H195V283H194V288H193V283H192V288H191V287H190V284H189V283H188V284H187V282H186V283H185V284H184V284H183V283H182V283H181V282H180V283H179V282H178V283H177V282H176V283H175V283H174V284H173V283H172V284H171V284H170V282H169V284H168V283H167V281H166V282H165V281H164V283H163V283H162V282H161V283H160V284H159V286H158V281H157V282H156V282H155V282H154V282H153V282H152V283H151V282H150V285H149V282H148V285H147V282H146V282H145V287H144V281H143V282H142V282H141V281H140V282H139V280H138V281H137V282H136V281H135V282H134V280H133V281H132V280H131ZM633 257L637 268L637 270L633 281Z" fill="#00ff00"/>
<rect x="637" y="148" width="14" height="1" fill="#00ff00"/>
<rect x="637" y="269" width="14" height="1" fill="#00ff00"/>
<rect x="307" y="91" width="3" height="3" fill="#ff0000"/>
<rect x="307" y="97" width="3" height="3" fill="#ff0000"/>
<rect x="307" y="103" width="3" height="3" fill="#ff0000"/>
<rect x="307" y="109" width="3" height="3" fill="#ff0000"/>
<rect x="307" y="115" width="3" height="3" fill="#ff0000"/>
<rect x="307" y="121" width="3" height="3" fill="#ff0000"/>
<rect x="307" y="127" width="3" height="3" fill="#ff0000"/>
<rect x="307" y="133" width="3" height="3" fill="#ff0000"/>
<rect x="307" y="139" width="3" height="3" fill="#ff0000"/>
<rect x="307" y="145" width="3" height="3" fill="#ff0000"/>
<rect x="307" y="151" width="3" height="3" fill="#ff0000"/>
<rect x="307" y="157" width="3" height="3" fill="#ff0000"/>
<rect x="307" y="163" width="3" height="3" fill="#ff0000"/>
<rect x="307" y="169" width="3" height="3" fill="#ff0000"/>
<rect x="307" y="175" width="3" height="3" fill="#ff0000"/>
<rect x="307" y="181" width="3" height="3" fill="#ff0000"/>
<rect x="307" y="187" width="3" height="3" fill="#ff0000"/>
<rect x="307" y="193" width="3" height="3" fill="#ff0000"/>
<rect x="307" y="199" width="3" height="3" fill="#ff0000"/>
<rect x="307" y="205" width="3" height="3" fill="#ff0000"/>
<rect x="307" y="211" width="3" height="3" fill="#ff0000"/>
<rect x="307" y="217" width="3" height="3" fill="#ff0000"/>
<rect x="307" y="223" width="3" height="3" fill="#ff0000"/>
<rect x="307" y="229" width="3" height="3" fill="#ff0000"/>
<rect x="307" y="235" width="3" height="3" fill="#ff0000"/>
<rect x="307" y="241" width="3" height="3" fill="#ff0000"/>
<rect x="307" y="247" width="3" height="3" fill="#ff0000"/>
<rect x="307" y="253" width="3" height="3" fill="#ff0000"/>
<rect x="307" y="259" width="3" height="3" fill="#ff0000"/>
<rect x="307" y="265" width="3" height="3" fill="#ff0000"/>
<rect x="307" y="271" width="3" height="3" fill="#ff0000"/>
<rect x="307" y="277" width="3" height="3" fill="#ff0000"/>
<rect x="307" y="283" width="3" height="3" fill="#ff0000"/>
<rect x="307" y="289" width="3" height="3" fill="#ff0000"/>
<rect x="307" y="295" width="3" height="3" fill="#ff0000"/>
<rect x="307" y="301" width="3" height="3" fill="#ff0000"/>
<rect x="307" y="307" width="3" height="3" fill="#ff0000"/>
<rect x="307" y="313" width="3" height="3" fill="#ff0000"/>
<rect x="307" y="319" width="3" height="3" fill="#ff0000"/>
<rect x="307" y="325" width="3" height="3" fill="#ff0000"/>
<rect x="307" y="90" width="3" height="1" fill="#ff0000"/>
<rect x="307" y="328" width="3" height="2" fill="#ff0000"/>
<rect x="130" y="84" width="1" height="4" fill="#fff"/>
<rect x="130" y="331" width="1" height="4" fill="#fff"/>
<rect x="140" y="85" width="1" height="3" fill="#fff"/>
<rect x="140" y="331" width="1" height="2" fill="#fff"/>
<rect x="150" y="85" width="1" height="3" fill="#fff"/>
<rect x="150" y="331" width="1" height="2" fill="#fff"/>
<rect x="160" y="85" width="1" height="3" fill="#fff"/>
<rect x="160" y="331" width="1" height="2" fill="#fff"/>
<rect x="170" y="84" width="1" height="4" fill="#fff"/>
<rect x="170" y="331" width="1" height="4" fill="#fff"/>
<rect x="180" y="85" width="1" height="3" fill="#fff"/>
<rect x="180" y="331" width="1" height="2" fill="#fff"/>
<rect x="190" y="85" width="1" height="3" fill="#fff"/>
<rect x="190" y="331" width="1" height="2" fill="#fff"/>
<rect x="200" y="85" width="1" height="3" fill="#fff"/>
<rect x="200" y="331" width="1" height="2" fill="#fff"/>
<rect x="210" y="84" width="1" height="4" fill="#fff"/>
<rect x="210" y="331" width="1" height="4" fill="#fff"/>
<rect x="220" y="85" width="1" height="3" fill="#fff"/>
<rect x="220" y="331" width="1" height="2" fill="#fff"/>
<rect x="230" y="85" width="1" height="3" fill="#fff"/>
<rect x="230" y="331" width="1" height="2" fill="#fff"/>
<rect x="240" y="85" width="1" height="3" fill="#fff"/>
<rect x="240" y="331" width="1" height="2" fill="#fff"/>
<rect x="250" y="84" width="1" height="4" fill="#fff"/>
<rect x="250" y="331" width="1" height="4" fill="#fff"/>
<rect x="260" y="85" width="1" height="3" fill="#fff"/>
<rect x="260" y="331" width="1" height="2" fill="#fff"/>
<rect x="270" y="85" width="1" height="3" fill="#fff"/>
<rect x="270" y="331" width="1" height="2" fill="#fff"/>
<rect x="280" y="85" width="1" height="3" fill="#fff"/>
<rect x="280" y="331" width="1" height="2" fill="#fff"/>
<rect x="290" y="84" width="1" height="4" fill="#fff"/>
<rect x="290" y="331" width="1" height="4" fill="#fff"/>
<rect x="300" y="85" width="1" height="3" fill="#fff"/>
<rect x="300" y="331" width="1" height="2" fill="#fff"/>
<rect x="310" y="85" width="1" height="3" fill="#fff"/>
<rect x="310" y="331" width="1" height="2" fill="#fff"/>
<rect x="320" y="85" width="1" height="3" fill="#fff"/>
<rect x="320" y="331" width="1" height="2" fill="#fff"/>
<rect x="330" y="84" width="1" height="4" fill="#fff"/>
<rect x="330" y="331" width="1" height="4" fill="#fff"/>
<rect x="340" y="85" width="1" height="3" fill="#fff"/>
<rect x="340" y="331" width="1" height="2" fill="#fff"/>
<rect x="350" y="85" width="1" height="3" fill="#fff"/>
<rect x="350" y="331" width="1" height="2" fill="#fff"/>
<rect x="360" y="85" width="1" height="3" fill="#fff"/>
<rect x="360" y="331" width="1" height="2" fill="#fff"/>
<rect x="370" y="84" width="1" height="4" fill="#fff"/>
<rect x="370" y="331" width="1" height="4" fill="#fff"/>
<rect x="380" y="85" width="1" height="3" fill="#fff"/>
<rect x="380" y="331" width="1" height="2" fill="#fff"/>
<rect x="390" y="85" width="1" height="3" fill="#fff"/>
<rect x="390" y="331" width="1" height="2" fill="#fff"/>
<rect x="400" y="85" width="1" height="3" fill="#fff"/>
<rect x="400" y="331" width="1" height="2" fill="#fff"/>
<rect x="410" y="84" width="1" height="4" fill="#fff"/>
<rect x="410" y="331" width="1" height="4" fill="#fff"/>
<rect x="420" y="85" width="1" height="3" fill="#fff"/>
<rect x="420" y="331" width="1" height="2" fill="#fff"/>
<rect x="430" y="85" width="1" height="3" fill="#fff"/>
<rect x="430" y="331" width="1" height="2" fill="#fff"/>
<rect x="440" y="85" width="1" height="3" fill="#fff"/>
<rect x="440" y="331" width="1" height="2" fill="#fff"/>
<rect x="450" y="84" width="1" height="4" fill="#fff"/>
<rect x="450" y="331" width="1" height="4" fill="#fff"/>
<rect x="460" y="85" width="1" height="3" fill="#fff"/>
<rect x="460" y="331" width="1" height="2" fill="#fff"/>
<rect x="470" y="85" width="1" height="3" fill="#fff"/>
<rect x="470" y="331" width="1" height="2" fill="#fff"/>
<rect x="480" y="85" width="1" height="3" fill="#fff"/>
<rect x="480" y="331" width="1" height="2" fill="#fff"/>
<rect x="490" y="84" width="1" height="4" fill="#fff"/>
<rect x="490" y="331" width="1" height="4" fill="#fff"/>
<rect x="500" y="85" width="1" height="3" fill="#fff"/>
<rect x="500" y="331" width="1" height="2" fill="#fff"/>
<rect x="510" y="85" width="1" height="3" fill="#fff"/>
<rect x="510" y="331" width="1" height="2" fill="#fff"/>
<rect x="520" y="85" width="1" height="3" fill="#fff"/>
<rect x="520" y="331" width="1" height="2" fill="#fff"/>
<rect x="530" y="84" width="1" height="4" fill="#fff"/>
<rect x="530" y="331" width="1" height="4" fill="#fff"/>
<rect x="540" y="85" width="1" height="3" fill="#fff"/>
<rect x="540" y="331" width="1" height="2" fill="#fff"/>
<rect x="550" y="85" width="1" height="3" fill="#fff"/>
<rect x="550" y="331" width="1" height="2" fill="#fff"/>
<rect x="560" y="85" width="1" height="3" fill="#fff"/>
<rect x="560" y="331" width="1" height="2" fill="#fff"/>
<rect x="570" y="84" width="1" height="4" fill="#fff"/>
<rect x="570" y="331" width="1" height="4" fill="#fff"/>
<rect x="580" y="85" width="1" height="3" fill="#fff"/>
<rect x="580" y="331" width="1" height="2" fill="#fff"/>
<rect x="590" y="85" width="1" height="3" fill="#fff"/>
<rect x="590" y="331" width="1" height="2" fill="#fff"/>
<rect x="600" y="85" width="1" height="3" fill="#fff"/>
<rect x="600" y="331" width="1" height="2" fill="#fff"/>
<rect x="610" y="84" width="1" height="4" fill="#fff"/>
<rect x="610" y="331" width="1" height="4" fill="#fff"/>
<rect x="620" y="85" width="1" height="3" fill="#fff"/>
<rect x="620" y="331" width="1" height="2" fill="#fff"/>
<rect x="630" y="85" width="1" height="3" fill="#fff"/>
<rect x="630" y="331" width="1" height="2" fill="#fff"/>
<rect x="640" y="85" width="1" height="3" fill="#fff"/>
<rect x="640" y="331" width="1" height="2" fill="#fff"/>
<rect x="127" y="95" width="2" height="1" fill="#fff"/>
<rect x="651" y="95" width="2" height="1" fill="#fff"/>
<rect x="127" y="113" width="2" height="1" fill="#fff"/>
<rect x="651" y="113" width="2" height="1" fill="#fff"/>
<rect x="127" y="130" width="2" height="1" fill="#fff"/>
<rect x="651" y="130" width="2" height="1" fill="#fff"/>
<rect x="127" y="147" width="2" height="1" fill="#fff"/>
<rect x="651" y="147" width="2" height="1" fill="#fff"/>
<rect x="127" y="165" width="2" height="1" fill="#fff"/>
<rect x="651" y="165" width="2" height="1" fill="#fff"/>
<rect x="127" y="182" width="2" height="1" fill="#fff"/>
<rect x="651" y="182" width="2" height="1" fill="#fff"/>
<rect x="127" y="200" width="2" height="1" fill="#fff"/>
<rect x="651" y="200" width="2" height="1" fill="#fff"/>
<rect x="127" y="216" width="2" height="1" fill="#fff"/>
<rect x="651" y="216" width="2" height="1" fill="#fff"/>
<rect x="127" y="234" width="2" height="1" fill="#fff"/>
<rect x="651" y="234" width="2" height="1" fill="#fff"/>
<rect x="127" y="251" width="2" height="1" fill="#fff"/>
<rect x="651" y="251" width="2" height="1" fill="#fff"/>
<rect x="127" y="268" width="2" height="1" fill="#fff"/>
<rect x="651" y="268" width="2" height="1" fill="#fff"/>
<rect x="127" y="286" width="2" height="1" fill="#fff"/>
<rect x="651" y="286" width="2" height="1" fill="#fff"/>
<rect x="127" y="303" width="2" height="1" fill="#fff"/>
<rect x="651" y="303" width="2" height="1" fill="#fff"/>
<rect x="127" y="321" width="2" height="1" fill="#fff"/>
<rect x="651" y="321" width="2" height="1" fill="#fff"/>
<rect x="130" y="60" width="1" height="12" fill="#000"/>
<rect x="650" y="60" width="1" height="12" fill="#000"/>
<rect x="131" y="60" width="519" height="2" fill="#e8ffe8"/>
<rect x="131" y="62" width="519" height="8" fill="#00ff00"/>
<rect x="131" y="70" width="519" height="2" fill="#006400"/>
<rect x="130" y="63" width="6" height="6" fill="#000"/>
<rect x="131" y="64" width="4" height="4" fill="#fff"/>
<rect x="645" y="63" width="6" height="6" fill="#000"/>
<rect x="646" y="64" width="4" height="4" fill="#fff"/>
<rect x="130" y="347" width="1" height="12" fill="#000"/>
<rect x="650" y="347" width="1" height="12" fill="#000"/>
<rect x="131" y="347" width="519" height="2" fill="#e8ffe8"/>
<rect x="131" y="349" width="519" height="8" fill="#00ff00"/>
<rect x="131" y="357" width="519" height="2" fill="#006400"/>
<rect x="130" y="350" width="6" height="6" fill="#000"/>
<rect x="131" y="351" width="4" height="4" fill="#fff"/>
<rect x="645" y="350" width="6" height="6" fill="#000"/>
<rect x="646" y="351" width="4" height="4" fill="#fff"/>
</svg>
<div class="tl" style="left:150px;top:72px">00:15</div>
<div class="tl" style="left:150px;top:335px">00:15</div>
<div class="tl" style="left:190px;top:72px">00:31</div>
<div class="tl" style="left:190px;top:335px">00:31</div>
<div class="tl" style="left:230px;top:72px">00:47</div>
<div class="tl" style="left:230px;top:335px">00:47</div>
<div class="tl" style="left:270px;top:72px">01:03</div>
<div class="tl" style="left:270px;top:335px">01:03</div>
<div class="tl" style="left:310px;top:72px">01:19</div>
<div class="tl" style="left:310px;top:335px">01:19</div>
<div class="tl" style="left:350px;top:72px">01:34</div>
<div class="tl" style="left:350px;top:335px">01:34</div>
<div class="tl" style="left:390px;top:72px">01:50</div>
<div class="tl" style="left:390px;top:335px">01:50</div>
<div class="tl" style="left:430px;top:72px">02:06</div>
<div class="tl" style="left:430px;top:335px">02:06</div>
<div class="tl" style="left:470px;top:72px">02:22</div>
<div class="tl" style="left:470px;top:335px">02:22</div>
<div class="tl" style="left:510px;top:72px">02:38</div>
<div class="tl" style="left:510px;top:335px">02:38</div>
<div class="tl" style="left:550px;top:72px">02:53</div>
<div class="tl" style="left:550px;top:335px">02:53</div>
<div class="tl" style="left:590px;top:72px">03:09</div>
<div class="tl" style="left:590px;top:335px">03:09</div>
<div class="al l" style="top:92px">30000</div>
<div class="al r" style="top:92px;left:658px">30000</div>
<div class="al l" style="top:110px">20000</div>
<div class="al r" style="top:110px;left:658px">20000</div>
<div class="al l" style="top:127px">10000</div>
<div class="al r" style="top:127px;left:658px">10000</div>
<div class="al l" style="top:144px">0</div>
<div class="al r" style="top:144px;left:658px">0</div>
<div class="al l" style="top:162px">-10000</div>
<div class="al r" style="top:162px;left:656px">-10000</div>
<div class="al l" style="top:179px">-20000</div>
<div class="al r" style="top:179px;left:656px">-20000</div>
<div class="al l" style="top:197px">-30000</div>
<div class="al r" style="top:197px;left:656px">-30000</div>
<div class="al l" style="top:213px">30000</div>
<div class="al r" style="top:213px;left:658px">30000</div>
<div class="al l" style="top:231px">20000</div>
<div class="al r" style="top:231px;left:658px">20000</div>
<div class="al l" style="top:248px">10000</div>
<div class="al r" style="top:248px;left:658px">10000</div>
<div class="al l" style="top:265px">0</div>
<div class="al r" style="top:265px;left:658px">0</div>
<div class="al l" style="top:283px">-10000</div>
<div class="al r" style="top:283px;left:656px">-10000</div>
<div class="al l" style="top:300px">-20000</div>
<div class="al r" style="top:300px;left:656px">-20000</div>
<div class="al l" style="top:318px">-30000</div>
<div class="al r" style="top:318px;left:656px">-30000</div>

<!-- tabs -->
<div class="abs" style="left:19px;top:389px;width:743px;height:307px;border-top:1px solid #fff;border-left:1px solid #fff;border-right:1px solid #a0a0a0;background:#f0f0f0"></div>
<div class="tab" style="left:21px;width:88px">General settings</div>
<div class="tab" style="left:109px;width:81px">Rulers settings</div>
<div class="tab" style="left:190px;width:97px">Scrollbars settings</div>
<div class="tab" style="left:287px;width:100px">Waveform settings</div>
<div class="abs" style="left:387px;top:369px;width:103px;height:22px;border-top:1px solid #fff;border-left:1px solid #fff;border-right:1px solid #a0a0a0;background:#f0f0f0"></div>
<div class="lbl" style="left:394px;top:373px">Media file playback</div>

<div class="btn" style="left:44px;top:402px;width:230px;height:26px;line-height:22px">Load test media file...</div>
<div class="btn" style="left:43px;top:435px;width:75px;height:26px;line-height:23px">Play</div>
<div class="btn" style="left:121px;top:435px;width:75px;height:26px;line-height:23px">Resume<div class="abs" style="left:2px;top:2px;width:69px;height:20px;border:1px dotted #000"></div></div>
<div class="btn" style="left:199px;top:435px;width:75px;height:26px;line-height:23px">Stop</div>

<div class="lbl" style="left:481px;top:403px">Status: Paused</div>
<div class="lbl" style="left:433px;top:451px">Sound duration</div>
<div class="sunk" style="left:523px;top:446px;width:76px;height:19px">00:03:25.961</div>
<div class="lbl" style="left:433px;top:485px">Sound position</div>
<div class="sunk" style="left:523px;top:480px;width:76px;height:19px">00:01:10.415</div>

<div class="lbl" style="left:340px;top:529px">Use the mouse to manually scroll the waveform below or to pause playback</div>
<svg class="abs" style="left:0;top:0" width="780" height="704">
 <rect x="289" y="547" width="458" height="55" fill="#000"/>
 <path d="M291 569H291V569H292V568H293V569H294V569H295V569H296V568H297V566H298V566H299V567H300V566H301V565H302V569H303V569H304V568H305V569H306V566H307V568H308V567H309V564H310V567H311V567H312V567H313V564H314V568H315V564H316V566H317V568H318V566H319V562H320V567H321V568H322V564H323V567H324V567H325V567H326V568H327V565H328V567H329V567H330V567H331V565H332V567H333V567H334V567H335V567H336V567H337V565H338V562H339V567H340V567H341V567H342V567H343V563H344V567H345V563H346V567H347V566H348V567H349V567H350V563H351V565H352V567H353V567H354V567H355V567H356V569H357V568H358V569H359V569H360V569H361V565H362V568H363V570H364V569H365V569H366V569H367V569H368V570H369V569H370V569H371V568H372V569H373V568H374V567H375V567H376V567H377V567H378V564H379V566H380V567H381V567H382V563H383V567H384V566H385V567H386V568H387V566H388V567H389V567H390V567H391V565H392V567H393V567H394V567H395V567H396V565H397V569H398V571H399V568H400V569H401V567H402V566H403V567H404V566H405V567H406V566H407V567H408V565H409V567H410V568H411V564H412V565H413V566H414V564H415V565H416V568H417V567H418V566H419V567H420V567H421V567H422V567H423V567H424V564H425V567H426V563H427V567H428V566H429V565H430V568H431V567H432V567H433V567H434V567H435V565H436V566H437V567H438V567H439V563H440V567H441V567H442V568H443V567H444V567H445V566H446V566H447V566H448V567H449V567H450V567H451V567H452V567H453V566H454V567H455V570H456V568H457V572H458V570H459V569H460V564H461V563H462V567H463V567H464V568H465V567H466V567H467V564H468V565H469V563H470V568H471V566H472V563H473V564H474V567H475V567H476V567H477V567H478V567H479V567H480V567H481V567H482V568H483V570H484V569H485V571H486V571H487V567H488V567H489V566H490V567H491V567H492V567H493V567H494V567H495V568H496V566H497V567H498V566H499V567H500V566H501V565H502V568H503V566H504V566H505V567H506V567H507V566H508V567H509V568H510V566H511V567H512V567H513V567H514V566H515V567H516V568H517V567H518V567H519V567H520V567H521V567H522V567H523V567H524V568H525V567H526V567H527V565H528V568H529V566H530V564H531V564H532V566H533V567H534V566H535V568H536V568H537V567H538V566H539V568H540V566H541V567H542V566H543V563H544V566H545V568H546V568H547V566H548V566H549V567H550V567H551V567H552V567H553V567H554V566H555V568H556V568H557V570H558V572H559V568H560V568H561V567H562V566H563V567H564V565H565V567H566V567H567V568H568V567H569V570H570V570H571V570H572V567H573V569H574V567H575V567H576V567H577V566H578V567H579V566H580V566H581V567H582V566H583V568H584V566H585V567H586V565H587V567H588V567H589V567H590V565H591V567H592V568H593V566H594V568H595V569H596V570H597V571H598V569H599V568H600V567H601V563H602V567H603V566H604V566H605V567H606V566H607V566H608V568H609V567H610V566H611V567H612V568H613V567H614V564H615V566H616V563H617V566H618V567H619V566H620V568H621V568H622V567H623V563H624V567H625V564H626V566H627V564H628V567H629V568H630V567H631V567H632V567H633V567H634V566H635V567H636V567H637V567H638V567H639V568H640V568H641V566H642V567H643V567H644V565H645V567H646V567H647V568H648V568H649V566H650V564H651V567H652V567H653V567H654V566H655V566H656V565H657V570H658V571H659V568H660V568H661V566H662V566H663V568H664V567H665V568H666V567H667V567H668V567H669V566H670V568H671V564H672V567H673V567H674V568H675V567H676V568H677V567H678V567H679V567H680V564H681V567H682V567H683V567H684V563H685V567H686V567H687V567H688V566H689V567H690V564H691V568H692V567H693V567H694V567H695V568H696V568H697V567H698V568H699V567H700V567H701V565H702V567H703V566H704V567H705V568H706V565H707V567H708V567H709V568H710V567H711V567H712V567H713V565H714V563H715V567H716V566H717V567H718V566H719V568H720V566H721V567H722V567H723V567H724V567H725V564H726V567H727V568H728V565H729V566H730V563H731V567H732V567H733V566H734V567H735V568H736V567H737V568H738V566H739V564H740V568H741V568H742V567H743V567H744V584H743V586H742V585H741V585H740V588H739V585H738V584H737V587H736V586H735V588H734V585H733V585H732V585H731V585H730V585H729V587H728V585H727V586H726V585H725V585H724V586H723V585H722V588H721V588H720V585H719V585H718V584H717V585H716V590H715V584H714V584H713V585H712V585H711V586H710V585H709V585H708V585H707V584H706V585H705V585H704V585H703V585H702V585H701V585H700V585H699V585H698V584H697V587H696V585H695V586H694V584H693V585H692V585H691V588H690V585H689V585H688V586H687V585H686V585H685V585H684V585H683V586H682V585H681V586H680V585H679V585H678V589H677V586H676V585H675V584H674V584H673V587H672V585H671V585H670V585H669V585H668V585H667V585H666V585H665V585H664V585H663V585H662V585H661V584H660V582H659V580H658V581H657V582H656V583H655V584H654V584H653V584H652V584H651V587H650V586H649V584H648V585H647V584H646V588H645V583H644V584H643V583H642V584H641V584H640V583H639V584H638V583H637V583H636V584H635V583H634V584H633V584H632V585H631V584H630V584H629V588H628V584H627V584H626V584H625V583H624V584H623V584H622V585H621V585H620V585H619V584H618V583H617V584H616V585H615V584H614V584H613V583H612V584H611V584H610V583H609V584H608V587H607V586H606V585H605V583H604V583H603V583H602V584H601V586H600V583H599V582H598V579H597V582H596V582H595V585H594V585H593V585H592V584H591V583H590V583H589V585H588V584H587V584H586V585H585V584H584V585H583V584H582V586H581V584H580V584H579V584H578V583H577V585H576V585H575V583H574V584H573V582H572V583H571V581H570V583H569V585H568V584H567V584H566V585H565V585H564V584H563V583H562V584H561V583H560V582H559V580H558V582H557V584H556V585H555V585H554V584H553V585H552V585H551V587H550V583H549V583H548V584H547V585H546V584H545V585H544V584H543V584H542V586H541V584H540V584H539V583H538V583H537V584H536V584H535V584H534V589H533V584H532V583H531V585H530V584H529V584H528V586H527V584H526V587H525V583H524V583H523V583H522V584H521V584H520V584H519V584H518V584H517V584H516V584H515V586H514V583H513V584H512V584H511V589H510V586H509V584H508V585H507V584H506V584H505V583H504V584H503V587H502V585H501V585H500V587H499V584H498V584H497V584H496V584H495V584H494V584H493V584H492V584H491V584H490V584H489V584H488V583H487V582H486V580H485V583H484V583H483V584H482V584H481V587H480V584H479V583H478V584H477V584H476V583H475V583H474V583H473V584H472V585H471V584H470V583H469V584H468V584H467V583H466V589H465V584H464V583H463V585H462V584H461V584H460V582H459V583H458V580H457V581H456V583H455V586H454V583H453V587H452V583H451V583H450V584H449V583H448V583H447V584H446V584H445V584H444V584H443V585H442V584H441V585H440V585H439V584H438V584H437V586H436V584H435V588H434V584H433V585H432V584H431V584H430V584H429V585H428V589H427V585H426V585H425V584H424V586H423V586H422V583H421V587H420V583H419V584H418V584H417V583H416V584H415V585H414V583H413V585H412V585H411V584H410V583H409V583H408V585H407V584H406V584H405V584H404V583H403V584H402V583H401V583H400V586H399V580H398V586H397V582H396V583H395V584H394V583H393V584H392V583H391V583H390V584H389V585H388V583H387V583H386V583H385V586H384V584H383V583H382V584H381V583H380V584H379V585H378V585H377V584H376V584H375V584H374V585H373V583H372V583H371V583H370V583H369V585H368V583H367V584H366V583H365V583H364V584H363V582H362V583H361V584H360V583H359V582H358V583H357V583H356V583H355V584H354V584H353V585H352V585H351V584H350V584H349V584H348V583H347V584H346V584H345V585H344V584H343V586H342V584H341V584H340V583H339V584H338V585H337V584H336V583H335V583H334V584H333V584H332V586H331V585H330V585H329V583H328V584H327V584H326V584H325V584H324V585H323V587H322V585H321V586H320V584H319V583H318V585H317V586H316V586H315V585H314V585H313V585H312V583H311V585H310V584H309V584H308V587H307V584H306V582H305V581H304V580H303V582H302V584H301V583H300V585H299V584H298V584H297V586H296V583H295V582H294V585H293V582H292V585H291Z" fill="#007f00"/>
<path d="M291 572H291V572H292V572H293V571H294V572H295V573H296V571H297V572H298V571H299V570H300V571H301V573H302V571H303V573H304V571H305V572H306V569H307V571H308V571H309V571H310V572H311V571H312V571H313V571H314V571H315V568H316V566H317V572H318V572H319V572H320V572H321V572H322V570H323V572H324V571H325V571H326V570H327V572H328V571H329V568H330V571H331V571H332V570H333V571H334V572H335V571H336V571H337V572H338V570H339V571H340V572H341V572H342V571H343V572H344V571H345V571H346V571H347V572H348V571H349V572H350V572H351V571H352V572H353V570H354V572H355V573H356V573H357V573H358V572H359V572H360V568H361V571H362V573H363V571H364V572H365V573H366V573H367V572H368V573H369V572H370V572H371V572H372V571H373V570H374V572H375V570H376V572H377V572H378V572H379V572H380V571H381V571H382V572H383V571H384V572H385V570H386V571H387V568H388V570H389V571H390V571H391V570H392V571H393V572H394V570H395V571H396V572H397V572H398V574H399V572H400V572H401V572H402V571H403V571H404V571H405V570H406V572H407V571H408V568H409V571H410V570H411V572H412V568H413V571H414V571H415V571H416V571H417V572H418V571H419V572H420V571H421V572H422V571H423V571H424V571H425V571H426V567H427V571H428V570H429V572H430V572H431V572H432V571H433V571H434V570H435V568H436V570H437V572H438V570H439V572H440V570H441V572H442V571H443V570H444V571H445V572H446V572H447V570H448V570H449V571H450V571H451V571H452V571H453V571H454V570H455V571H456V571H457V573H458V573H459V571H460V571H461V571H462V571H463V571H464V571H465V571H466V571H467V570H468V571H469V571H470V571H471V570H472V570H473V570H474V572H475V571H476V572H477V572H478V571H479V571H480V572H481V572H482V572H483V571H484V571H485V573H486V572H487V573H488V572H489V570H490V571H491V571H492V571H493V572H494V571H495V570H496V570H497V571H498V571H499V571H500V571H501V571H502V571H503V571H504V571H505V571H506V571H507V571H508V572H509V571H510V571H511V571H512V571H513V571H514V571H515V571H516V570H517V571H518V571H519V571H520V571H521V571H522V570H523V571H524V569H525V571H526V571H527V571H528V569H529V572H530V571H531V570H532V571H533V572H534V571H535V572H536V571H537V570H538V571H539V571H540V571H541V571H542V571H543V571H544V571H545V571H546V571H547V572H548V572H549V570H550V570H551V571H552V572H553V571H554V570H555V572H556V568H557V569H558V572H559V572H560V572H561V571H562V571H563V571H564V569H565V572H566V566H567V571H568V571H569V572H570V571H571V573H572V572H573V571H574V571H575V570H576V570H577V571H578V571H579V570H580V572H581V572H582V571H583V570H584V572H585V571H586V570H587V571H588V571H589V570H590V571H591V572H592V571H593V570H594V571H595V572H596V572H597V572H598V572H599V572H600V570H601V571H602V571H603V570H604V571H605V571H606V570H607V568H608V570H609V571H610V571H611V571H612V570H613V572H614V568H615V571H616V569H617V570H618V572H619V571H620V571H621V571H622V571H623V570H624V571H625V571H626V571H627V571H628V572H629V570H630V570H631V570H632V570H633V572H634V571H635V570H636V572H637V572H638V570H639V571H640V569H641V571H642V571H643V571H644V571H645V570H646V571H647V571H648V570H649V571H650V570H651V570H652V570H653V571H654V571H655V571H656V572H657V572H658V573H659V572H660V572H661V572H662V570H663V571H664V571H665V571H666V572H667V570H668V571H669V572H670V570H671V572H672V572H673V571H674V571H675V571H676V572H677V569H678V571H679V571H680V570H681V572H682V571H683V570H684V571H685V571H686V571H687V571H688V570H689V571H690V571H691V571H692V570H693V571H694V570H695V572H696V570H697V571H698V572H699V570H700V571H701V567H702V571H703V572H704V571H705V571H706V571H707V570H708V570H709V571H710V571H711V571H712V571H713V571H714V571H715V570H716V570H717V571H718V572H719V572H720V571H721V572H722V571H723V570H724V571H725V570H726V572H727V569H728V571H729V571H730V571H731V568H732V572H733V571H734V571H735V571H736V570H737V571H738V568H739V571H740V572H741V571H742V572H743V571H744V580H743V580H742V579H741V580H740V580H739V579H738V580H737V579H736V581H735V581H734V579H733V579H732V580H731V583H730V580H729V581H728V581H727V579H726V580H725V580H724V580H723V582H722V580H721V580H720V581H719V581H718V580H717V579H716V580H715V580H714V580H713V580H712V580H711V580H710V580H709V579H708V580H707V580H706V580H705V581H704V581H703V579H702V580H701V579H700V585H699V581H698V581H697V580H696V580H695V580H694V581H693V579H692V580H691V581H690V581H689V579H688V581H687V580H686V580H685V581H684V581H683V584H682V581H681V581H680V582H679V581H678V579H677V579H676V580H675V580H674V581H673V583H672V581H671V580H670V580H669V581H668V580H667V580H666V580H665V580H664V580H663V580H662V581H661V579H660V578H659V578H658V579H657V578H656V579H655V580H654V580H653V580H652V580H651V579H650V581H649V579H648V579H647V580H646V580H645V580H644V583H643V580H642V581H641V579H640V581H639V581H638V581H637V580H636V580H635V580H634V580H633V579H632V581H631V581H630V580H629V580H628V581H627V580H626V580H625V584H624V580H623V579H622V580H621V580H620V581H619V580H618V580H617V580H616V580H615V580H614V580H613V579H612V580H611V580H610V581H609V581H608V580H607V579H606V579H605V583H604V581H603V580H602V580H601V581H600V578H599V578H598V577H597V578H596V579H595V582H594V580H593V581H592V579H591V582H590V581H589V583H588V579H587V580H586V579H585V580H584V580H583V579H582V581H581V581H580V580H579V581H578V580H577V581H576V579H575V580H574V579H573V578H572V577H571V578H570V579H569V580H568V581H567V579H566V580H565V579H564V579H563V581H562V580H561V579H560V578H559V578H558V583H557V579H556V582H555V579H554V580H553V581H552V580H551V580H550V580H549V580H548V580H547V580H546V579H545V581H544V580H543V580H542V579H541V580H540V581H539V579H538V580H537V581H536V581H535V581H534V581H533V580H532V580H531V581H530V580H529V580H528V580H527V580H526V580H525V579H524V580H523V579H522V581H521V581H520V581H519V580H518V580H517V581H516V580H515V581H514V580H513V581H512V580H511V581H510V579H509V580H508V580H507V580H506V580H505V580H504V580H503V580H502V580H501V580H500V583H499V580H498V579H497V580H496V580H495V579H494V580H493V581H492V580H491V584H490V580H489V581H488V578H487V578H486V578H485V578H484V578H483V580H482V581H481V581H480V581H479V580H478V580H477V581H476V579H475V579H474V580H473V581H472V581H471V580H470V581H469V581H468V579H467V580H466V580H465V580H464V580H463V580H462V581H461V580H460V579H459V578H458V578H457V578H456V579H455V579H454V579H453V580H452V580H451V580H450V581H449V581H448V580H447V583H446V585H445V581H444V579H443V581H442V579H441V580H440V580H439V580H438V581H437V581H436V579H435V581H434V581H433V581H432V580H431V580H430V580H429V580H428V580H427V580H426V580H425V580H424V580H423V579H422V581H421V580H420V580H419V580H418V579H417V581H416V579H415V580H414V580H413V581H412V579H411V580H410V580H409V579H408V580H407V579H406V581H405V581H404V580H403V580H402V580H401V579H400V579H399V578H398V577H397V580H396V580H395V580H394V581H393V581H392V579H391V581H390V581H389V581H388V579H387V580H386V580H385V580H384V580H383V579H382V580H381V580H380V579H379V580H378V580H377V580H376V579H375V579H374V580H373V579H372V579H371V579H370V578H369V579H368V579H367V579H366V579H365V579H364V578H363V579H362V579H361V578H360V580H359V579H358V579H357V578H356V578H355V580H354V582H353V581H352V580H351V580H350V580H349V580H348V579H347V580H346V581H345V581H344V580H343V580H342V581H341V580H340V580H339V581H338V580H337V579H336V580H335V581H334V581H333V580H332V579H331V580H330V580H329V581H328V580H327V580H326V580H325V583H324V580H323V579H322V580H321V579H320V580H319V584H318V580H317V580H316V580H315V580H314V581H313V581H312V580H311V580H310V580H309V581H308V580H307V580H306V579H305V578H304V577H303V578H302V578H301V580H300V580H299V579H298V579H297V579H296V578H295V579H294V580H293V579H292V580H291Z" fill="#00ff00"/>
 <rect x="517" y="549" width="2" height="51" fill="#fff"/>
</svg>

<!-- video -->
<div class="abs" style="left:34px;top:471px;width:248px;height:202px;background:#000"></div>
<svg class="abs" style="left:34px;top:471px" width="248" height="202" viewBox="0 0 780 635">
 <defs>
  <pattern id="hound" width="12" height="12" patternUnits="userSpaceOnUse" patternTransform="rotate(-10)">
   <rect width="12" height="12" fill="#161828"/>
   <rect x="2" y="1" width="7" height="8" fill="#e0e0e8"/>
  </pattern>
  <linearGradient id="vbg" x1="0" y1="0" x2="1" y2="1"><stop offset="0" stop-color="#e9ebeb"/><stop offset="1" stop-color="#e3e5e7"/></linearGradient>
  <linearGradient id="hair" x1="0" y1="0" x2="0" y2="1"><stop offset="0" stop-color="#f0ead0"/><stop offset="1" stop-color="#e6dcb4"/></linearGradient>
 </defs>
 <rect x="8" y="10" width="764" height="612" fill="url(#vbg)"/>
 <rect x="764" y="10" width="8" height="612" fill="#fff" opacity=".6"/>
 <rect x="8" y="614" width="764" height="8" fill="#fff" opacity=".6"/>
 <!-- extended left arm -->
 <path d="M8 262 L60 280 L98 290 L102 335 L60 328 L8 296 Z" fill="#e4cac0"/>
 <path d="M5 160 L18 165 L22 262 L5 272 Z" fill="#141418"/>
 <!-- sleeve left -->
 <path d="M90 292 L160 284 L228 252 L262 198 L292 240 L312 300 L300 340 L262 362 L180 368 L100 364 L90 330 Z" fill="url(#hound)"/>
 <!-- torso -->
 <path d="M256 330 L300 300 L345 322 L395 332 L445 296 L498 308 L527 335 L522 420 L494 500 L474 560 L464 622 L275 622 L266 520 L254 420 Z" fill="url(#hound)"/>
 <path d="M120 318 L250 300 L255 312 L122 332 Z" fill="#161828" opacity=".8"/>
 <path d="M268 330 L280 330 L300 622 L288 622 Z" fill="#161828" opacity=".6"/>
 <path d="M470 320 L486 318 L480 430 L468 432 Z" fill="#161828" opacity=".7"/>
 <!-- forearm -->
 <path d="M402 360 L438 362 L450 440 L442 520 L430 555 L404 550 L398 480 Z" fill="#e8cec4"/>
 <path d="M404 392 L444 394 L444 400 L404 398 Z" fill="#c86060" opacity=".5"/>
 <!-- face -->
 <path d="M330 215 L370 185 L412 200 L425 260 L410 318 L375 330 L340 310 L322 265 Z" fill="#ead2c6"/>
 <!-- hair -->
 <path d="M258 262 L262 200 L280 150 L305 110 L340 82 L372 54 L398 66 L410 104 L436 150 L450 200 L456 244 L432 222 L412 196 L390 180 L362 186 L342 220 L326 266 L308 302 L286 296 L268 286 Z" fill="url(#hair)"/>
 <path d="M300 140 L340 96 L372 60 L394 82 L382 150 L356 206 L334 250 L318 236 Z" fill="#f4eed6" opacity=".75"/>
 <path d="M282 180 L300 150 L310 240 L296 280 Z" fill="#d8cc9c" opacity=".5"/>
 <!-- sunglasses -->
 <path d="M322 250 Q340 238 360 246 L412 234 Q418 250 404 264 Q384 270 372 256 L360 258 Q350 274 332 270 Q320 262 322 250 Z" fill="#0c0c14"/>
 <!-- mouth -->
 <ellipse cx="366" cy="298" rx="11" ry="5" fill="#a87a78"/>
 <!-- glove raised -->
 <path d="M398 276 L422 252 L456 250 L452 318 L432 360 L402 356 L396 320 Z" fill="#16182c"/>
 <path d="M404 200 L430 204 L448 254 L420 262 Z" fill="#e2c4b6"/>
</svg>

</body></html>
